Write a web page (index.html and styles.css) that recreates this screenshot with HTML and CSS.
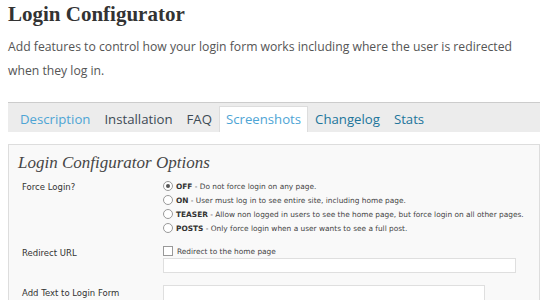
FILE: index.html
```html
<!DOCTYPE html>
<html lang="en">
<head>
    <meta charset="UTF-8">
    <title>Login Configurator</title>
    <link rel="stylesheet" href="styles.css">
</head>
<body>
    <div class="plugin">
        <h1 class="plugin-title">Login Configurator</h1>
        <p class="plugin-desc">Add features to control how your login form works including where the user is redirected when they log in.</p>

        <nav class="tabs">
            <a href="#" class="tab tab-light">Description</a>
            <a href="#" class="tab tab-dark">Installation</a>
            <a href="#" class="tab tab-dark">FAQ</a>
            <a href="#" class="tab tab-light active">Screenshots</a>
            <a href="#" class="tab">Changelog</a>
            <a href="#" class="tab">Stats</a>
        </nav>

        <div class="shot">
            <h2 class="shot-title">Login Configurator Options</h2>

            <div class="form-row">
                <div class="form-label label-force">Force Login?</div>
                <div class="form-field field-force">
                    <div class="option"><span class="radio checked"></span><b>OFF</b>&nbsp;- Do not force login on any page.</div>
                    <div class="option"><span class="radio"></span><b>ON</b>&nbsp;- User must log in to see entire site, including home page.</div>
                    <div class="option"><span class="radio"></span><b>TEASER</b>&nbsp;- Allow non logged in users to see the home page, but force login on all other pages.</div>
                    <div class="option"><span class="radio"></span><b>POSTS</b>&nbsp;- Only force login when a user wants to see a full post.</div>
                </div>
            </div>

            <div class="form-row">
                <div class="form-label label-redirect">Redirect URL</div>
                <div class="form-field field-redirect">
                    <div class="option"><span class="check"></span>Redirect to the home page</div>
                    <div class="text-input"></div>
                </div>
            </div>

            <div class="form-row">
                <div class="form-label label-text">Add Text to Login Form</div>
                <div class="form-field field-text">
                    <div class="text-input short"></div>
                </div>
            </div>
        </div>
    </div>
</body>
</html>
```

FILE: styles.css
```css
body {
    margin: 0;
    padding: 0;
    background-color: #ffffff;
    overflow: hidden;
}

.plugin {
    width: 532px;
    margin-left: 8px;
    font-family: "Open Sans", sans-serif;
}

.plugin-title {
    font-family: "Liberation Serif", serif;
    font-weight: bold;
    font-size: 21px;
    line-height: 26px;
    color: #333333;
    margin: 0;
    padding-top: 1px;
}

.plugin-desc {
    width: 520px;
    font-size: 12.2px;
    line-height: 24px;
    color: #555555;
    margin: 8px 0 0 0;
}

/* Tabs */
.tabs {
    display: flex;
    align-items: flex-end;
    height: 29px;
    margin-top: 19px;
    padding-left: 5px;
    background-color: #ececec;
    border-top: 1px solid #cccccc;
}

.tab {
    display: block;
    padding: 0 6px;
    font-size: 13.2px;
    line-height: 24px;
    padding-bottom: 1px;
    color: #21759b;
    text-decoration: none;
    border: 1px solid transparent;
    border-bottom: none;
}

.tab-light {
    color: #4ea5d5;
}

.tab-dark {
    color: #3d4a55;
}

.tab.active {
    background-color: #ffffff;
    border-color: #dddddd;
}

/* Screenshot panel */
.shot {
    margin-top: 12px;
    height: 170px;
    background-color: #f9f9f9;
    border: 1px solid #dddddd;
    border-bottom: none;
    font-family: "DejaVu Sans", Verdana, sans-serif;
    color: #333333;
}

.shot-title {
    font-family: "Liberation Serif", serif;
    font-style: italic;
    font-weight: normal;
    font-size: 17px;
    color: #464646;
    margin: 0;
    padding: 7px 0 0 9px;
    line-height: 21px;
}

.form-row {
    display: grid;
    grid-template-columns: 141px 1fr;
    padding-left: 13px;
}

.form-label {
    font-size: 8.5px;
    line-height: 14px;
}

.label-force {
    padding-top: 7px;
}

.label-redirect {
    padding-top: 11px;
}

.label-text {
    padding-top: 13px;
}

.field-force {
    padding-top: 6px;
}

.field-redirect {
    padding-top: 9px;
}

.field-text {
    padding-top: 12px;
}

.option {
    display: flex;
    align-items: center;
    height: 14px;
    font-size: 7.4px;
    color: #444444;
    white-space: nowrap;
}

.option b {
    font-weight: bold;
    color: #333333;
}

.radio {
    width: 8px;
    height: 8px;
    border: 1px solid #999999;
    border-radius: 50%;
    background-color: #ffffff;
    margin-right: 3px;
    position: relative;
}

.radio.checked::after {
    content: "";
    position: absolute;
    left: 2px;
    top: 2px;
    width: 4px;
    height: 4px;
    border-radius: 50%;
    background-color: #555555;
}

.check {
    width: 8px;
    height: 8px;
    border: 1px solid #999999;
    background-color: #ffffff;
    margin-right: 4px;
}

.text-input {
    width: 351px;
    height: 13px;
    background-color: #ffffff;
    border: 1px solid #dfdfdf;
}

.text-input.short {
    width: 320px;
    height: 20px;
}
```
